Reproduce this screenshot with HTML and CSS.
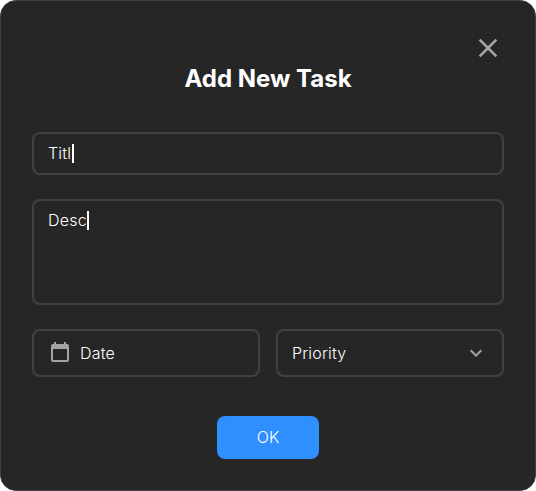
FILE: index.html
```html
<!DOCTYPE html>
<html lang="en">
<head>
<meta charset="utf-8">
<title>Add New Task</title>
<link rel="stylesheet" href="styles.css">
</head>
<body>
<form class="dialog">
  <button class="close" type="button" aria-label="Close">
    <svg width="32" height="32" viewBox="0 0 24 24"><path d="M19 6.41L17.59 5 12 10.59 6.41 5 5 6.41 10.59 12 5 17.59 6.41 19 12 13.41 17.59 19 19 17.59 13.41 12z"/></svg>
  </button>
  <h1 class="heading">Add New Task</h1>
  <div class="field field-title">Titl<span class="caret"></span></div>
  <div class="field field-desc">Desc<span class="caret"></span></div>
  <div class="row">
    <div class="field picker">
      <svg class="calendar" width="24" height="24" viewBox="0 0 24 24"><path d="M19 4h-1V2h-2v2H8V2H6v2H5c-1.11 0-1.99.9-1.99 2L3 20c0 1.1.89 2 2 2h14c1.1 0 2-.9 2-2V6c0-1.1-.9-2-2-2zm0 16H5V9h14v11z"/></svg>
      <span>Date</span>
    </div>
    <div class="field picker select">
      <span>Priority</span>
      <svg width="24" height="24" viewBox="0 0 24 24"><path d="M16.59 8.59L12 13.17 7.41 8.59 6 10l6 6 6-6z"/></svg>
    </div>
  </div>
  <button class="ok" type="button">OK</button>
</form>
</body>
</html>
```
FILE: styles.css
```css
* {
  box-sizing: border-box;
}

body {
  margin: 0;
  background: #fff;
  font: 300 16px/20px Inter, sans-serif;
  color: #fff;
}

.dialog {
  display: flex;
  flex-direction: column;
  width: 536px;
  height: 491px;
  padding: 31px;
  border: 1px solid #414141;
  border-radius: 16px;
  background: #262626;
}

svg {
  display: block;
  flex: none;
  fill: #a3a3a3;
}

.close {
  align-self: flex-end;
  width: 32px;
  height: 32px;
  padding: 0;
  border: 0;
  background: none;
}

.heading {
  margin: 0 0 39px;
  font-size: 24px;
  font-weight: 700;
  line-height: 29px;
  text-align: center;
}

.field {
  display: flex;
  border: 2px solid #414141;
  border-radius: 8px;
  letter-spacing: 0.2px;
}

.field-title {
  height: 43px;
  padding: 9px 14px;
}

.field-desc {
  height: 106px;
  margin: 24px 0;
  padding: 9px 14px;
}

.caret {
  width: 2px;
  height: 19px;
  margin: 1px 0 0 0.5px;
  background: #fff;
}

.row {
  display: grid;
  grid-template-columns: 1fr 1fr;
  gap: 16px;
}

.picker {
  align-items: center;
  gap: 8px;
  height: 48px;
  padding: 0 14px;
}

.select {
  justify-content: space-between;
}

.calendar {
  margin-bottom: 2px;
}

.ok {
  align-self: center;
  width: 102px;
  height: 43px;
  margin-top: 39px;
  padding: 0 0 1px;
  border: 0;
  border-radius: 8px;
  background: #2f8fff;
  color: #fff;
  font: inherit;
}
```
